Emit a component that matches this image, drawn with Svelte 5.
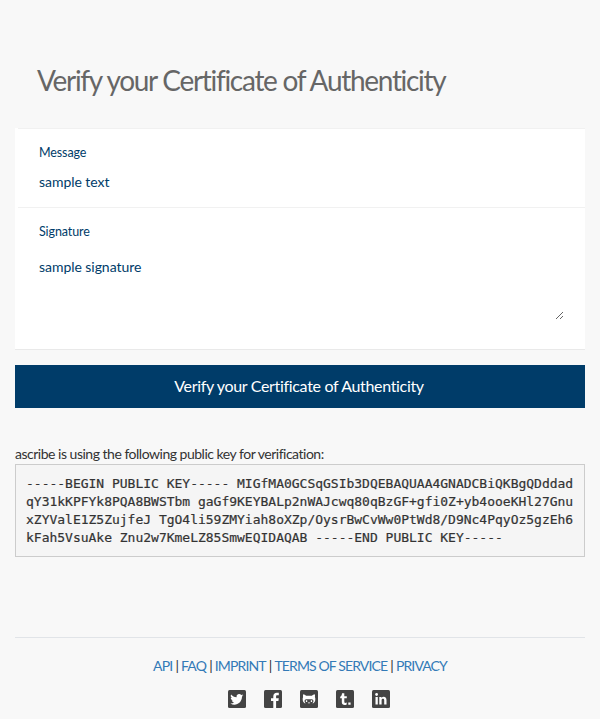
<script>
  let message = $state('sample text');
  let signature = $state('sample signature');

  const links = ['API', 'FAQ', 'IMPRINT', 'TERMS OF SERVICE', 'PRIVACY'];
  const publicKey =
    '-----BEGIN PUBLIC KEY----- MIGfMA0GCSqGSIb3DQEBAQUAA4GNADCBiQKBgQDddadqY31kKPFYk8PQA8BWSTbm gaGf9KEYBALp2nWAJcwq80qBzGF+gfi0Z+yb4ooeKHl27GnuxZYValE1Z5ZujfeJ TgO4li59ZMYiah8oXZp/OysrBwCvWw0PtWd8/D9Nc4PqyOz5gzEh6kFah5VsuAke Znu2w7KmeLZ85SmwEQIDAQAB -----END PUBLIC KEY-----';
</script>

<main>
  <h1>Verify your Certificate of Authenticity</h1>

  <form onsubmit={(e) => e.preventDefault()}>
    <div class="fields">
      <div class="field message">
        <label for="message">Message</label>
        <input id="message" type="text" bind:value={message} />
      </div>
      <div class="field signature">
        <label for="signature">Signature</label>
        <textarea id="signature" bind:value={signature}></textarea>
      </div>
    </div>
    <button type="submit">Verify your Certificate of Authenticity</button>
  </form>

  <p class="intro">ascribe is using the following public key for verification:</p>
  <pre>{publicKey}</pre>

  <footer>
    <nav>
      {#each links as link, i}{#if i > 0}<span class="sep">|</span>{/if}<a href="#{link}">{link}</a>{/each}
    </nav>
    <div class="social">
      <svg viewBox="0 0 18 18" aria-label="Twitter">
        <rect width="18" height="18" rx="1.5" fill="#444" />
        <path fill="#fff" transform="translate(-0.9 -0.3) scale(1.08)" d="M15 5.1c-.4.2-.9.4-1.4.4.5-.3.9-.8 1.1-1.3-.5.3-1 .5-1.6.6a2.5 2.5 0 0 0-4.3 2.3C6.7 7 4.9 6 3.7 4.5c-.7 1.2-.3 2.6.8 3.3-.4 0-.8-.1-1.1-.3 0 1.2.8 2.2 2 2.5-.4.1-.8.1-1.1 0 .3 1 1.2 1.7 2.3 1.700-1 .8-2.300 1.200-3.600 1.100 4.800 2.900 10.800-.3 10.800-6.400.5-.4.900-.8 1.200-1.300z" />
      </svg>
      <svg viewBox="0 0 18 18" aria-label="Facebook">
        <rect width="18" height="18" rx="1.5" fill="#444" />
        <path fill="#fff" d="M9.300 18V11H7V8.300h2.300V6.300C9.300 4 10.700 2.800 12.800 2.800h2v2.500h-1.400c-1.100 0-1.300.5-1.300 1.300v1.700h2.700L14.400 11h-2.300v7z" />
      </svg>
      <svg viewBox="0 0 18 18" aria-label="GitHub">
        <rect width="18" height="18" rx="1.5" fill="#444" />
        <path fill="#fff" d="M3.200 4.300c1 .1 2.200.7 2.900 1.400h5.800c.7-.7 1.900-1.300 2.900-1.400.3.8.3 1.800.1 2.600.4.7.5 1.600.4 2.500-.1 1.800-.7 3-2 3.800h-1c.8-.6 1.100-1.300 1.100-2.200 0-1-.6-1.700-1.600-1.700H6.200c-1 0-1.600.7-1.600 1.700 0 .9.3 1.600 1.100 2.200h-1c-1.300-.8-1.900-2-2-3.800-.1-.9 0-1.800.4-2.500-.2-.8-.2-1.800.1-2.600z" />
        <path fill="#fff" d="M5.900 10.300h1.300v1.800H5.900zM10.800 10.300h1.300v1.800h-1.300zM7.900 12.600h2.200v.7H7.900z" />
      </svg>
      <svg viewBox="0 0 18 18" aria-label="Tumblr">
        <rect width="18" height="18" rx="1.5" fill="#444" />
        <path fill="#fff" d="M6 3.300h2.300v3h2.500v2H8.300v3.400c0 1.300 1 1.500 2.400.8v2c-2.300 1.100-4.900.5-4.900-2.200v-4H4.200V6.800C5.300 6.400 5.900 5.300 6 3.300zM12.300 12.500h2.300v2.300h-2.300z" />
      </svg>
      <svg viewBox="0 0 18 18" aria-label="LinkedIn">
        <rect width="18" height="18" rx="1.5" fill="#444" />
        <circle cx="4.6" cy="4.5" r="1.4" fill="#fff" />
        <path fill="#fff" d="M3.500 7h2.300v7.500H3.500zM7.300 7h2.200v1c1.300-1.900 5-1.500 5 1.900v4.600h-2.300v-4.200c0-2-2.600-1.900-2.600 0v4.200H7.300z" />
      </svg>
    </div>
  </footer>
</main>

<style>
  :global(body) {
    background: #f8f8f8;
  }
  main {
    box-sizing: border-box;
    height: 719px;
    padding: 0 15px;
    overflow: hidden;
    font-family: Lato, 'Open Sans', sans-serif;
    font-size: 14px;
    line-height: 20px;
    color: #333;
  }
  h1 {
    margin: 0;
    padding: 64px 0 32px 22px;
    font-size: 28px;
    line-height: 32px;
    font-weight: 400;
    letter-spacing: -1.3px;
    color: #666;
    white-space: nowrap;
  }
  .fields {
    background: #fff;
    border-bottom: 1px solid #e9e9e9;
    height: 221px;
  }
  .field {
    box-sizing: border-box;
    margin-left: 3px;
    padding: 15px 21px 0;
    border-top: 1px solid #f1f1f1;
    display: flex;
    flex-direction: column;
    align-items: flex-start;
  }
  .message {
    height: 79px;
  }
  label {
    font-size: 12.5px;
    line-height: 18px;
    letter-spacing: -0.1px;
    color: #003c69;
  }
  input,
  textarea {
    box-sizing: border-box;
    width: 100%;
    margin: 0;
    padding: 0;
    border: 0;
    outline: 0;
    background: transparent;
    font: 14px/20px Lato, sans-serif;
    letter-spacing: -0.05px;
    color: #003c69;
  }
  input {
    margin-top: 8px;
    height: 22px;
  }
  textarea {
    width: 525px;
    height: 63px;
    margin-top: 16px;
  }
  button {
    display: block;
    width: 100%;
    height: 43px;
    margin: 15px 0 0;
    padding: 0 2px 2px 0;
    border: 0;
    background: #003c69;
    color: #fff;
    font: 16px/41px Lato, sans-serif;
    letter-spacing: -0.33px;
  }
  .intro {
    margin: 36px 0 0;
    letter-spacing: -0.49px;
    white-space: nowrap;
  }
  pre {
    box-sizing: border-box;
    height: 93px;
    margin: 0;
    padding: 10px 9px 0 10px;
    border: 1px solid #ccc;
    background: #f5f5f5;
    font: 13px/18px 'DejaVu Sans Mono', monospace;
    letter-spacing: -0.01px;
    -webkit-text-stroke: 0.2px #333;
    white-space: pre-wrap;
    word-break: break-all;
  }
  footer {
    margin-top: 80px;
    padding-top: 18px;
    border-top: 1px solid #e1e4e8;
    text-align: center;
  }
  nav {
    letter-spacing: -0.88px;
    white-space: nowrap;
  }
  .sep {
    padding: 0 3px 0 3.2px;
  }
  a {
    color: #337ab7;
    text-decoration: none;
  }
  .social {
    display: flex;
    justify-content: center;
    gap: 18px;
    margin-top: 14px;
    padding-left: 18px;
  }
  svg {
    width: 18px;
    height: 18px;
  }
</style>
